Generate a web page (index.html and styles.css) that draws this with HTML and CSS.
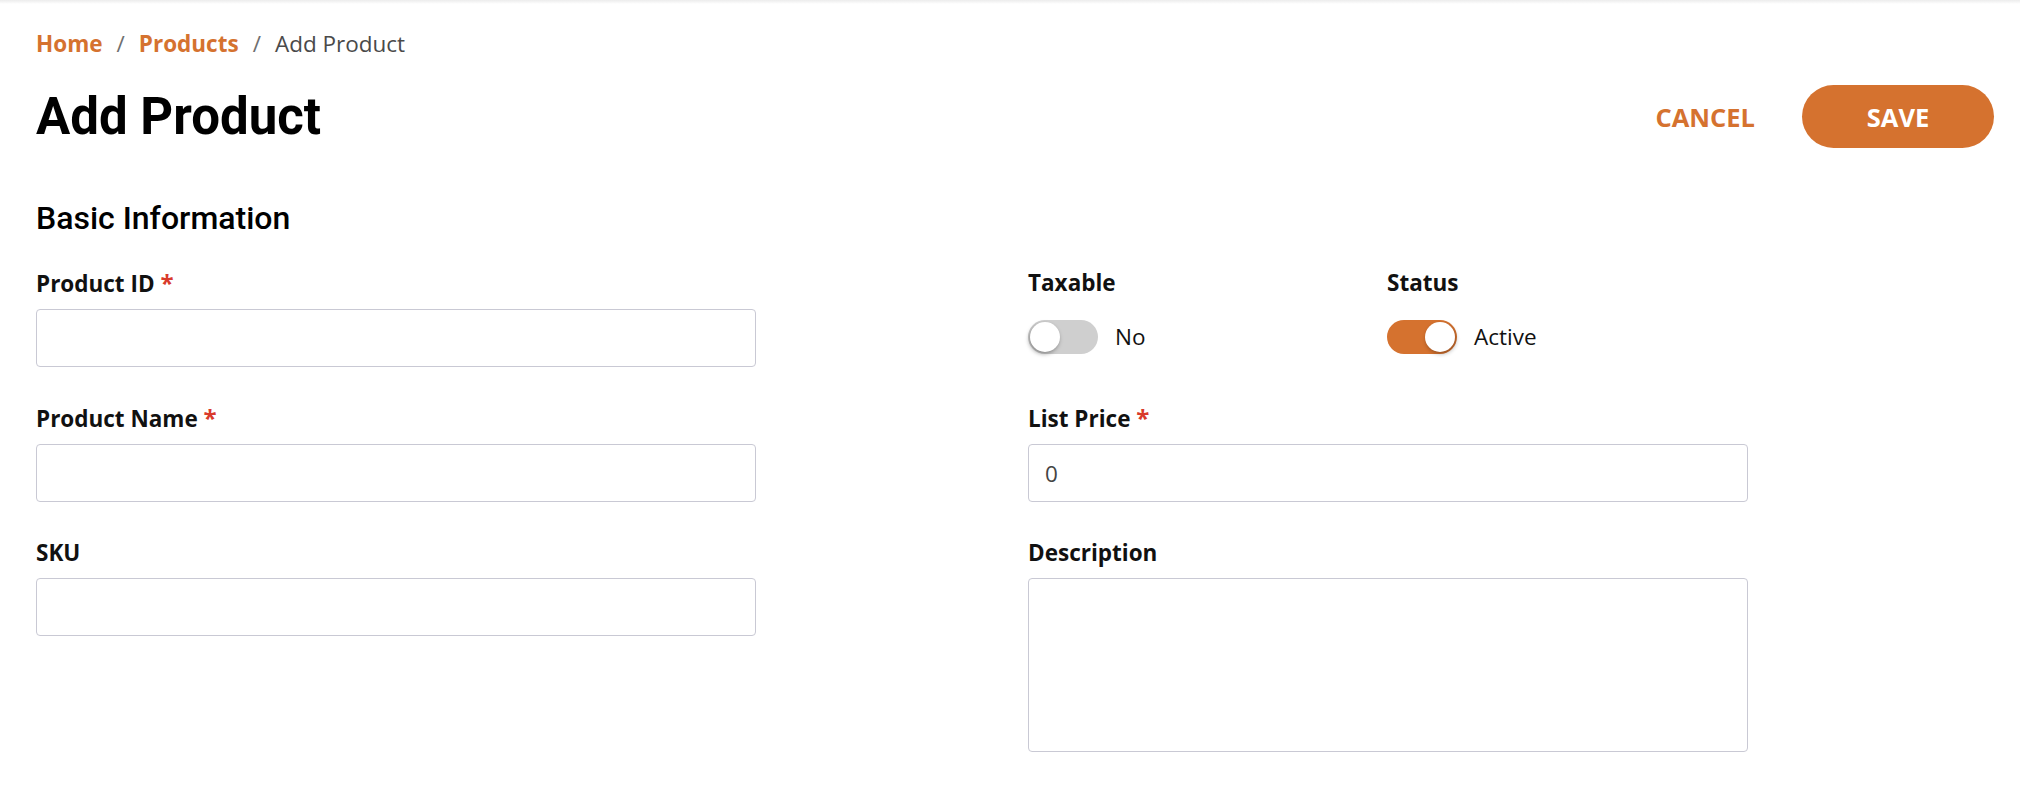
FILE: index.html
```html
<!DOCTYPE html>
<html lang="en">
<head>
<meta charset="utf-8">
<title>Add Product</title>
<link rel="stylesheet" href="styles.css">
</head>
<body>
<div class="top-shadow"></div>
<main class="page">
  <nav class="breadcrumb">
    <a class="crumb-link" href="#">Home</a>
    <span class="crumb-sep">/</span>
    <a class="crumb-link" href="#">Products</a>
    <span class="crumb-sep">/</span>
    <span class="crumb-current">Add Product</span>
  </nav>

  <header class="page-header">
    <h1 class="page-title">Add Product</h1>
    <div class="actions">
      <button class="btn btn-cancel" type="button">CANCEL</button>
      <button class="btn btn-save" type="button">SAVE</button>
    </div>
  </header>

  <section class="section">
    <h2 class="section-title">Basic Information</h2>
    <div class="form-grid">
      <div class="field">
        <label class="field-label">Product ID <span class="req">*</span></label>
        <input class="input" type="text">
      </div>

      <div class="field toggles">
        <div class="toggle-field">
          <label class="field-label">Taxable</label>
          <div class="toggle-line">
            <span class="switch"><span class="knob"></span></span>
            <span class="toggle-text">No</span>
          </div>
        </div>
        <div class="toggle-field">
          <label class="field-label">Status</label>
          <div class="toggle-line">
            <span class="switch on"><span class="knob"></span></span>
            <span class="toggle-text">Active</span>
          </div>
        </div>
      </div>

      <div class="field">
        <label class="field-label">Product Name <span class="req">*</span></label>
        <input class="input" type="text">
      </div>

      <div class="field">
        <label class="field-label">List Price <span class="req">*</span></label>
        <input class="input" type="text" value="0">
      </div>

      <div class="field">
        <label class="field-label">SKU</label>
        <input class="input" type="text">
      </div>

      <div class="field">
        <label class="field-label">Description</label>
        <textarea class="input textarea"></textarea>
      </div>
    </div>
  </section>
</main>
</body>
</html>
```

FILE: styles.css
```css
* { box-sizing: border-box; }

html, body {
  margin: 0;
  padding: 0;
  background: #ffffff;
  overflow: hidden;
}

body {
  font-family: "Open Sans", "Noto Sans", "Liberation Sans", sans-serif;
  color: #111;
}

.top-shadow {
  height: 4px;
  background: linear-gradient(to bottom, #ececec, #ffffff);
}

.page {
  padding: 25px 26px 0 36px;
}

/* breadcrumb */
.breadcrumb {
  display: flex;
  align-items: center;
  height: 30px;
  font-size: 22.5px;
  line-height: 30px;
}
.crumb-link {
  color: #d5722f;
  font-weight: 700;
  text-decoration: none;
}
.crumb-sep {
  color: #6f6f6f;
  margin: 0 14px;
}
.crumb-current {
  color: #4a4a4a;
}

/* header */
.page-header {
  display: flex;
  align-items: center;
  justify-content: space-between;
  margin-top: 26px;
  height: 63px;
}
.page-title {
  margin: 0;
  font-family: Roboto, "Liberation Sans", sans-serif;
  font-weight: 700;
  font-size: 51px;
  line-height: 63px;
  color: #000;
}
.actions {
  display: flex;
  align-items: center;
  gap: 27px;
}
.btn {
  font-family: "Open Sans", "Liberation Sans", sans-serif;
  font-weight: 700;
  font-size: 25.5px;
  border: none;
  cursor: pointer;
  height: 63px;
  padding: 0 20px;
  background: transparent;
}
.btn-cancel {
  color: #d5722f;
}
.btn-save {
  width: 192px;
  background: #d5722f;
  color: #fff;
  border-radius: 32px;
}

/* section */
.section {
  padding-right: 10px;
}
.section-title {
  margin: 50px 0 30px;
  font-family: Roboto, "Liberation Sans", sans-serif;
  font-weight: 500;
  font-size: 32px;
  line-height: 40px;
  color: #000;
}

.form-grid {
  display: grid;
  grid-template-columns: 1fr 1fr;
  column-gap: 36px;
  row-gap: 36px;
  align-items: start;
}

.field {
  display: flex;
  flex-direction: column;
  max-width: 720px;
}
.field-label {
  font-size: 22.5px;
  font-weight: 700;
  line-height: 30px;
  color: #111;
  margin-bottom: 10px;
}
.req {
  color: #d93a2b;
  font-size: 24px;
}

.input {
  width: 720px;
  height: 58px;
  border: 1px solid #c9c9d4;
  border-radius: 4px;
  padding: 0 16px;
  font-family: "Open Sans", "Liberation Sans", sans-serif;
  font-size: 22.5px;
  color: #444;
  background: #fff;
  outline: none;
}
.textarea {
  height: 174px;
  resize: none;
  padding: 12px 16px;
}

/* toggles */
.toggles {
  flex-direction: row;
}
.toggle-field {
  width: 359px;
  display: flex;
  flex-direction: column;
}
.toggle-field .field-label {
  margin-bottom: 22px;
}
.toggle-line {
  display: flex;
  align-items: center;
  gap: 17px;
  height: 34px;
}
.switch {
  position: relative;
  width: 70px;
  height: 34px;
  border-radius: 17px;
  background: #cfcfcf;
  flex: none;
}
.switch.on {
  background: #d5722f;
}
.knob {
  position: absolute;
  top: 2px;
  left: 2px;
  width: 30px;
  height: 30px;
  border-radius: 50%;
  background: #fff;
  box-shadow: -1px 2px 4px rgba(0, 0, 0, 0.35);
}
.switch.on .knob {
  left: 38px;
  box-shadow: 1px 2px 4px rgba(0, 0, 0, 0.3);
}
.toggle-text {
  font-size: 22.5px;
  line-height: 30px;
  color: #111;
}
```
